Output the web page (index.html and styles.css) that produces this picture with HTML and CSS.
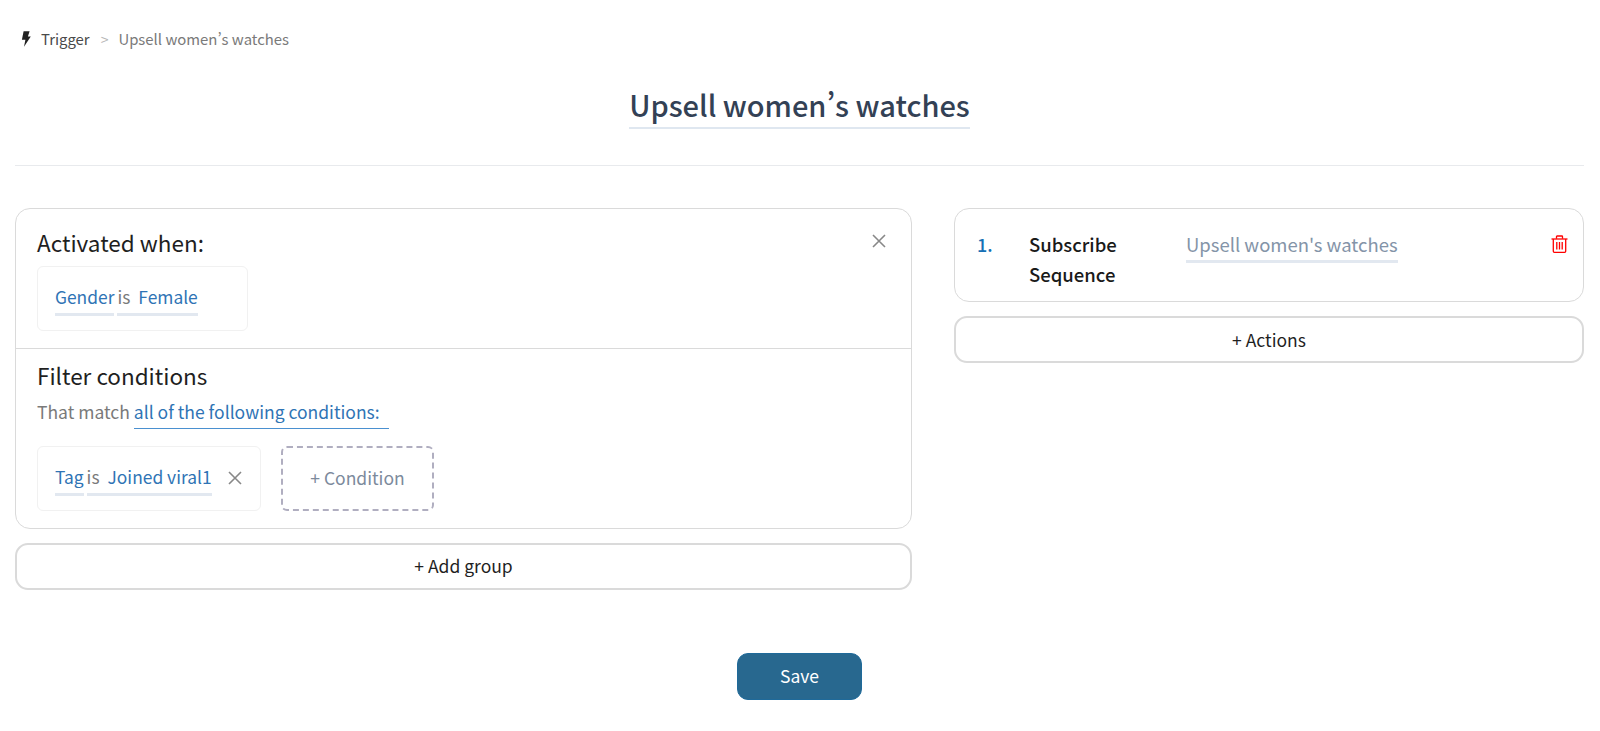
FILE: index.html
```html
<!DOCTYPE html>
<html lang="en">
<head>
<meta charset="utf-8">
<title>Upsell women's watches</title>
<link rel="stylesheet" href="styles.css">
</head>
<body>
<main class="page">
  <nav class="crumbs">
    <svg class="bolt" width="10" height="16" viewBox="0 0 10 16"><path d="M2.6 0.3H8.6L6.9 5.4H9.8L3 15.8L4.4 8.8H0.9Z" fill="#222"/></svg>
    <span class="crumb-root">Trigger</span>
    <span class="crumb-sep">&gt;</span>
    <span class="crumb-leaf">Upsell women’s watches</span>
  </nav>
  <header class="head">
    <h1 class="title">Upsell women’s watches</h1>
  </header>
  <section class="columns">
    <div class="col">
      <div class="card">
        <div class="sec sec-top">
          <h2 class="sec-title">Activated when:</h2>
          <button class="x x-top" aria-label="Close"><svg width="14" height="14" viewBox="0 0 14 14"><path d="M1 1L13 13M13 1L1 13" stroke="#888" stroke-width="1.6" fill="none"/></svg></button>
          <div class="chip chip-a">
            <span class="lnk">Gender</span><span class="lnk lnk-v"><span class="is">is</span>Female</span>
          </div>
        </div>
        <div class="sec sec-bot">
          <h2 class="sec-title">Filter conditions</h2>
          <p class="match">That match <span class="all">all of the following conditions:</span></p>
          <div class="conds">
            <div class="chip chip-b">
              <span class="lnk">Tag</span><span class="lnk lnk-v"><span class="is">is</span>Joined viral1</span>
              <svg class="chip-x" width="14" height="14" viewBox="0 0 14 14"><path d="M1 1L13 13M13 1L1 13" stroke="#888" stroke-width="1.6" fill="none"/></svg>
            </div>
            <div class="add-cond">+ Condition</div>
          </div>
        </div>
      </div>
      <div class="wide-btn wide-group">+ Add group</div>
    </div>
    <div class="col">
      <div class="card action">
        <span class="num">1.</span>
        <span class="act-name">Subscribe Sequence</span>
        <span class="act-val">Upsell women's watches</span>
        <svg class="trash" width="17" height="18" viewBox="0 0 17 18" fill="none" stroke="#ff0000" stroke-width="1.3"><path d="M0.5 4H16.5"/><path d="M5.5 3.8V1.6Q5.5 1 6.1 1H10.9Q11.5 1 11.5 1.6V3.8"/><path d="M2.3 4V16.2Q2.3 17.3 3.4 17.3H13.6Q14.7 17.3 14.7 16.2V4"/><path d="M5.8 7V14.5M8.5 7V14.5M11.2 7V14.5"/></svg>
      </div>
      <div class="wide-btn">+ Actions</div>
    </div>
  </section>
  <footer class="foot"><button class="save">Save</button></footer>
</main>
</body>
</html>
```
FILE: styles.css
```css
* { box-sizing: border-box; }
html, body { margin: 0; background: #fff; }
body {
  font-family: "Noto Sans CJK SC", "Noto Sans", sans-serif;
  font-feature-settings: "pwid" 1;
  color: #1f1f1f;
  overflow: hidden;
}
.page { padding: 0 16px 0 15px; height: 731px; }
.crumbs {
  display: flex; align-items: center;
  height: 20px; margin-top: 29px; padding-left: 6px;
  font-size: 14.9px; line-height: 20px;
}
.bolt { margin-right: 10px; }
.crumb-root { color: #4a4a4a; }
.crumb-sep { color: #b5b5b5; margin: 0 10px 0 11px; font-size: 14px; }
.crumb-leaf { color: #7a7a7a; }
.head {
  display: flex; justify-content: center;
  height: 117px; padding-top: 35px;
  border-bottom: 1px solid #e8eaed;
}
.title {
  margin: 0; height: 45px;
  font-size: 29px; line-height: 40px; font-weight: 500;
  color: #334155;
  border-bottom: 2px solid #dfe7f0;
}
.columns {
  display: grid; grid-template-columns: 897px 630px; column-gap: 42px;
  margin-top: 42px;
}
.col { display: flex; flex-direction: column; gap: 14px; }
.card { border: 1.5px solid #dadada; border-radius: 15px; background: #fff; }
.sec { position: relative; }
.sec-top { height: 140px; padding: 16px 0 0 21px; border-bottom: 1.5px solid #dadada; }
.sec-bot { height: 179px; padding: 9px 0 0 21px; }
.sec-title { margin: 0; font-size: 22.5px; line-height: 34px; font-weight: 400; color: #1f1f1f; }
.x { position: absolute; top: 25px; right: 25px; padding: 0; border: 0; background: none; display: flex; }
.chip {
  display: flex; align-items: flex-start;
  border: 1.5px solid #f1f1f1; border-radius: 6px;
  font-size: 17.4px; line-height: 26px;
  padding: 17px 17px 0;
  white-space: nowrap;
}
.chip-a { width: 211px; height: 65px; margin-top: 7px; }
.chip-b { width: 224px; height: 65px; }
.lnk { color: #2f74b5; border-bottom: 3px solid #e2e8f0; padding-bottom: 3px; }
.lnk-v { margin-left: 3px; }
.is { color: #7a7a7a; margin-right: 8px; }
.chip-x { margin: 7px 0 0 16px; }
.match { margin: 7px 0 0; font-size: 17.5px; line-height: 26px; color: #7a7a7a; }
.all {
  display: inline-block; width: 255px; color: #2f74b5;
  border-bottom: 1.5px solid #4a90d0; padding-bottom: 3px;
}
.conds { display: flex; gap: 20px; margin-top: 17px; }
.add-cond {
  display: flex; align-items: center; justify-content: center;
  width: 153px; height: 65px; padding-bottom: 2px;
  border: 2px dashed #b0aec0; border-radius: 6px;
  font-size: 17.5px; color: #7c8a9c;
}
.wide-btn {
  display: flex; align-items: center; justify-content: center;
  height: 47px;
  border: 2px solid #dadada; border-radius: 13px;
  font-size: 17.5px; color: #1f1f1f;
}
.wide-group { padding-bottom: 2px; }
.action {
  display: flex; align-items: flex-start; height: 94px;
  padding: 20px 15px 0 22px; font-size: 18.5px; line-height: 30px;
}
.num { width: 52px; color: #1670b5; font-weight: 500; font-size: 18px; }
.act-name { width: 157px; color: #1a1a1a; font-weight: 500; }
.act-val { color: #8494a8; border-bottom: 3px solid #e2e8f0; height: 34px; }
.trash { margin: 6px 0 0 auto; }
.foot { display: flex; justify-content: center; margin-top: 63px; }
.save {
  width: 125px; height: 47px; padding-bottom: 3px;
  background: #28688f; border: 1px solid #1f6a9a; border-radius: 11px;
  font: inherit; font-size: 17.5px; color: #fff;
}
```
